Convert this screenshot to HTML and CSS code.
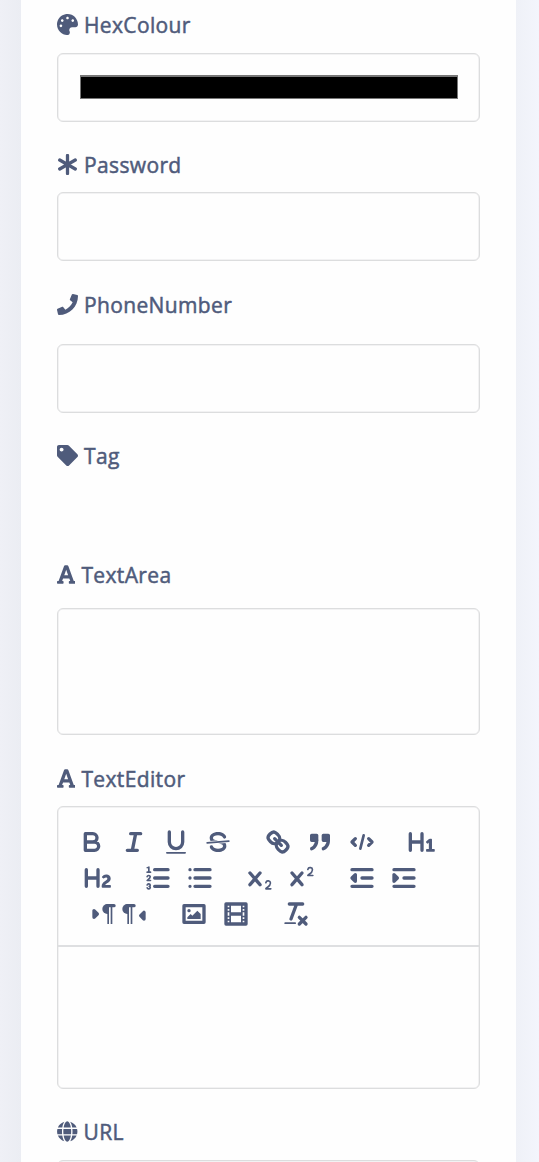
FILE: index.html
```html
<!DOCTYPE html>
<html lang="en">
<head>
<meta charset="utf-8">
<title>Form fields</title>
<link rel="stylesheet" href="styles.css">
</head>
<body>
<main class="card">
  <section class="field hex">
    <div class="label"><svg class="fa" viewBox="0 0 512 512"><path d="M204.3 5C104.9 24.4 24.8 104.3 5.2 203.4c-37 187 131.7 326.4 258.8 306.7 41.2-6.4 61.4-54.6 42.5-91.7-23.1-45.4 9.9-98.4 60.9-98.4h79.7c35.8 0 64.8-29.6 64.9-65.3C511.5 97.1 368.1-26.9 204.3 5zM96 320c-17.7 0-32-14.3-32-32s14.3-32 32-32 32 14.3 32 32-14.3 32-32 32zm32-128c-17.7 0-32-14.3-32-32s14.3-32 32-32 32 14.3 32 32-14.3 32-32 32zm128-64c-17.7 0-32-14.3-32-32s14.3-32 32-32 32 14.3 32 32-14.3 32-32 32zm128 64c-17.7 0-32-14.3-32-32s14.3-32 32-32 32 14.3 32 32-14.3 32-32 32z"/></svg><span>HexColour</span></div>
    <div class="input color"><div class="swatch"></div></div>
  </section>
  <section class="field password">
    <div class="label"><svg class="fa" viewBox="0 0 512 512"><path class="aster" d="M256 36V476M66 146L446 366M66 366L446 146"/></svg><span>Password</span></div>
    <div class="input"></div>
  </section>
  <section class="field phone">
    <div class="label"><svg class="fa" viewBox="0 0 512 512"><path d="M493.4 24.6l-104-24c-11.3-2.6-22.9 3.3-27.5 13.9l-48 112c-4.2 9.8-1.4 21.3 6.9 28l60.6 49.6c-36 76.7-98.9 140.5-177.2 177.2l-49.6-60.6c-6.8-8.3-18.2-11.1-28-6.9l-112 48C3.9 366.5-2 378.1.6 389.4l24 104C27.1 504.2 36.7 512 48 512c256.1 0 464-207.5 464-464 0-11.2-7.7-20.9-18.6-23.4z"/></svg><span>PhoneNumber</span></div>
    <div class="input"></div>
  </section>
  <section class="field tag">
    <div class="label"><svg class="fa" viewBox="0 0 512 512"><path d="M0 252.118V48C0 21.49 21.49 0 48 0h204.118a48 48 0 0 1 33.941 14.059l211.882 211.882c18.745 18.745 18.745 49.137 0 67.882L293.823 497.941c-18.745 18.745-49.137 18.745-67.882 0L14.059 286.059A48 48 0 0 1 0 252.118zM112 64c-26.51 0-48 21.49-48 48s21.49 48 48 48 48-21.49 48-48-21.49-48-48-48z"/></svg><span>Tag</span></div>
  </section>
  <section class="field area">
    <div class="label"><svg class="fa narrow" viewBox="0 0 448 512"><path d="M432 416h-23.41L277.88 53.69A32 32 0 0 0 247.58 32h-47.16a32 32 0 0 0-30.3 21.69L39.41 416H16a16 16 0 0 0-16 16v32a16 16 0 0 0 16 16h128a16 16 0 0 0 16-16v-32a16 16 0 0 0-16-16h-19.58l23.3-64h152.56l23.3 64H304a16 16 0 0 0-16 16v32a16 16 0 0 0 16 16h128a16 16 0 0 0 16-16v-32a16 16 0 0 0-16-16zM176.85 272L224 142.51 271.15 272z"/></svg><span>TextArea</span></div>
    <div class="input"></div>
  </section>
  <section class="field">
    <div class="label"><svg class="fa narrow" viewBox="0 0 448 512"><path d="M432 416h-23.41L277.88 53.69A32 32 0 0 0 247.58 32h-47.16a32 32 0 0 0-30.3 21.69L39.41 416H16a16 16 0 0 0-16 16v32a16 16 0 0 0 16 16h128a16 16 0 0 0 16-16v-32a16 16 0 0 0-16-16h-19.58l23.3-64h152.56l23.3 64H304a16 16 0 0 0-16 16v32a16 16 0 0 0 16 16h128a16 16 0 0 0 16-16v-32a16 16 0 0 0-16-16zM176.85 272L224 142.51 271.15 272z"/></svg><span>TextEditor</span></div>
    <div class="editor">
      <div class="toolbar">
        <div class="row">
          <div class="group">
            <svg class="ql" viewBox="0 0 18 18"><path class="s" d="M5,4H9.5A2.5,2.5,0,0,1,12,6.5v0A2.5,2.5,0,0,1,9.5,9H5V4ZM5,9h5.5A2.5,2.5,0,0,1,13,11.5v0A2.5,2.5,0,0,1,10.5,14H5V9Z"/></svg>
            <svg class="ql" viewBox="0 0 18 18"><path class="s" d="M7,4H13M5,14H11M8,14L10,4"/></svg>
            <svg class="ql" viewBox="0 0 18 18"><path class="s" d="M5,3V9a4.012,4.012,0,0,0,4,4H9a4.012,4.012,0,0,0,4-4V3"/><rect height="1" rx=".5" width="12" x="3" y="15"/></svg>
            <svg class="ql" viewBox="0 0 18 18"><path class="s thin" d="M15.5,8.5L2.5,9.5"/><path d="M9.007,8C6.542,7.791,6,7.519,6,6.5,6,5.792,7.283,5,9,5c1.571,0,2.765.679,2.969,1.309a1,1,0,0,0,1.9-.617C13.356,4.106,11.354,3,9,3,6.2,3,4,4.538,4,6.5a3.2,3.2,0,0,0,.5,1.843Z"/><path d="M8.984,10C11.457,10.208,12,10.479,12,11.5c0,0.708-1.283,1.5-3,1.5-1.571,0-2.765-.679-2.969-1.309a1,1,0,1,0-1.9.617C4.644,13.894,6.646,15,9,15c2.8,0,5-1.538,5-3.5a3.2,3.2,0,0,0-.5-1.843Z"/></svg>
          </div>
          <div class="group">
            <svg class="ql" viewBox="0 0 18 18"><path class="s" d="M7,7L11,11M8.9,4.577a3.476,3.476,0,0,1,.36,4.679A3.476,3.476,0,0,1,4.577,8.9C3.185,7.5,2.035,6.4,4.217,4.217S7.5,3.185,8.9,4.577ZM13.423,9.1a3.476,3.476,0,0,0-4.679-.36,3.476,3.476,0,0,0,.36,4.679c1.392,1.392,2.5,2.542,4.679.36S14.815,10.5,13.423,9.1Z"/></svg>
            <svg class="ql" viewBox="0 0 18 18"><rect class="s f block" height="3" width="3" x="4" y="5"/><rect class="s f block" height="3" width="3" x="11" y="5"/><path class="s f quote" d="M7,8c0,4.031-3,5-3,5M14,8c0,4.031-3,5-3,5"/></svg>
            <svg class="ql" viewBox="0 0 18 18"><path class="s" d="M5,7L3,9L5,11M13,7L15,9L13,11"/><path class="s slash" d="M10,5L8,13"/></svg>
          </div>
          <div class="group">
            <svg class="ql" viewBox="0 0 18 18"><path d="M10,4V14a1,1,0,0,1-2,0V10H3v4a1,1,0,0,1-2,0V4A1,1,0,0,1,3,4V8H8V4a1,1,0,0,1,2,0Zm6.06787,9.209H14.98975V7.59863a.54085.54085,0,0,0-.605-.60547h-.62744a1.01119,1.01119,0,0,0-.748.29688L11.645,8.56641a.5435.5435,0,0,0-.022.8584l.28613.30762a.53861.53861,0,0,0,.84717.0332l.09912-.08789a1.2137,1.2137,0,0,0,.2417-.35254h.02246s-.01123.30859-.01123.60547V13.209H12.041a.54085.54085,0,0,0-.605.60547v.43945a.54085.54085,0,0,0,.605.60547h4.02686a.54085.54085,0,0,0,.605-.60547v-.43945A.54085.54085,0,0,0,16.06787,13.209Z"/></svg>
          </div>
        </div>
        <div class="row second">
          <div class="group">
            <svg class="ql" viewBox="0 0 18 18"><path d="M16.73975,13.81445v.43945a.54085.54085,0,0,1-.605.60547H11.855a.58392.58392,0,0,1-.64893-.60547V14.0127c0-2.90527,3.39941-3.42187,3.39941-4.55469a.77675.77675,0,0,0-.84717-.78125,1.17684,1.17684,0,0,0-.83594.38477c-.2749.26367-.561.374-.85791.13184l-.4292-.34082c-.30811-.24219-.38525-.51758-.1543-.81445a2.97155,2.97155,0,0,1,2.45361-1.17676,2.45393,2.45393,0,0,1,2.68408,2.40918c0,2.45312-3.1792,2.92676-3.27832,3.93848h2.79443A.54085.54085,0,0,1,16.73975,13.81445ZM9,3A.99974.99974,0,0,0,8,4V8H3V4A1,1,0,0,0,1,4V14a1,1,0,0,0,2,0V10H8v4a1,1,0,0,0,2,0V4A.99974.99974,0,0,0,9,3Z"/></svg>
          </div>
          <div class="group">
            <svg class="ql" viewBox="0 0 18 18"><path class="s" d="M7,4H15M7,9H15M7,14H15"/><path class="s thin" d="M2.5,5.5H4.5M4.5,10.5h-2c0-.234,1.85-1.076,1.85-2.234A0.959,0.959,0,0,0,2.5,8.156M2.5,14.846a0.959,0.959,0,0,0,1.85-.109A0.7,0.7,0,0,0,3.75,14a0.688,0.688,0,0,0,.6-0.736,0.959,0.959,0,0,0-1.85-.109"/><path d="M3.5,6A0.5,0.5,0,0,1,3,5.5V3.085l-0.276.138A0.5,0.5,0,0,1,2.053,3c-0.124-.247-0.023-0.324.224-0.447l1-.5A0.5,0.5,0,0,1,4,2.5v3A0.5,0.5,0,0,1,3.5,6Z"/></svg>
            <svg class="ql" viewBox="0 0 18 18"><path class="s" d="M6,4H15M6,9H15M6,14H15M3,4H3M3,9H3M3,14H3"/></svg>
          </div>
          <div class="group">
            <svg class="ql" viewBox="0 0 18 18"><path d="M15.5,15H13.861a3.858,3.858,0,0,0,1.914-2.975,1.8,1.8,0,0,0-1.6-1.751A1.921,1.921,0,0,0,12.021,11.7a0.50013,0.50013,0,1,0,.957.291h0a0.914,0.914,0,0,1,1.053-.725,0.81,0.81,0,0,1,.744.762c0,1.076-1.16971,1.86982-1.93971,2.43082A1.45639,1.45639,0,0,0,12,15.5a0.5,0.5,0,0,0,.5.5h3A0.5,0.5,0,0,0,15.5,15Z"/><path d="M9.65,5.241a1,1,0,0,0-1.409.108L6,7.964,3.759,5.349A1,1,0,0,0,2.192,6.59178Q2.21541,6.6213,2.241,6.649L4.684,9.5,2.241,12.35A1,1,0,0,0,3.71,13.70722q.02557-.02768.049-.05722L6,11.036,8.241,13.65a1,1,0,1,0,1.567-1.24277Q9.78459,12.3777,9.759,12.35L7.316,9.5,9.759,6.651A1,1,0,0,0,9.65,5.241Z"/></svg>
            <svg class="ql" viewBox="0 0 18 18"><path d="M15.5,7H13.861a4.015,4.015,0,0,0,1.914-2.975,1.8,1.8,0,0,0-1.6-1.751A1.922,1.922,0,0,0,12.021,3.7a0.5,0.5,0,1,0,.957.291,0.917,0.917,0,0,1,1.053-.725,0.81,0.81,0,0,1,.744.762c0,1.077-1.164,1.925-1.934,2.486A1.423,1.423,0,0,0,12,7.5a0.5,0.5,0,0,0,.5.5h3A0.5,0.5,0,0,0,15.5,7Z"/><path d="M9.65,5.241a1,1,0,0,0-1.409.108L6,7.964,3.759,5.349A1,1,0,0,0,2.192,6.59178Q2.21541,6.6213,2.241,6.649L4.684,9.5,2.241,12.35A1,1,0,0,0,3.71,13.70722q.02557-.02768.049-.05722L6,11.036,8.241,13.65a1,1,0,1,0,1.567-1.24277Q9.78459,12.3777,9.759,12.35L7.316,9.5,9.759,6.651A1,1,0,0,0,9.65,5.241Z"/></svg>
          </div>
          <div class="group">
            <svg class="ql" viewBox="0 0 18 18"><path class="s" d="M3,14H15M3,4H15M9,9H15"/><path class="s f arrow" d="M5,7V11L3,9Z"/></svg>
            <svg class="ql" viewBox="0 0 18 18"><path class="s" d="M3,14H15M3,4H15M9,9H15"/><path class="s f arrow" d="M3,7V11L5,9Z"/></svg>
          </div>
        </div>
        <div class="row third">
          <div class="group">
            <svg class="ql ltr" viewBox="0 0 18 18"><path class="s f arrow" d="M3,11L5,9L3,7Z"/><path class="s" d="M15,4H11"/><path d="M11,3a3,3,0,0,0,0,6h1V3H11Z"/><rect height="11" width="1" x="11" y="4"/><rect height="11" width="1" x="13" y="4"/></svg>
            <svg class="ql" viewBox="0 0 18 18"><path class="s f arrow" d="M15,12L13,10L15,8Z"/><path class="s" d="M9,4H5"/><path d="M5,3A3,3,0,0,0,5,9H6V3H5Z"/><rect height="11" width="1" x="5" y="4"/><rect height="11" width="1" x="7" y="4"/></svg>
          </div>
          <div class="group">
            <svg class="ql" viewBox="0 0 18 18"><rect class="s" height="10" width="12" x="3" y="4"/><circle cx="6" cy="7" r="1"/><path d="M5,12V11L7,9L8,10L11,7L13,9V12Z"/></svg>
            <svg class="ql" viewBox="0 0 18 18"><rect class="s" height="12" width="12" x="3" y="3"/><path d="M5,3h1V15H5ZM12,3h1V15H12ZM5,8h8v2H5ZM3,5h3v1H3ZM3,7h3v1H3ZM3,10h3v1H3ZM3,12h3v1H3ZM12,5h3v1H12ZM12,7h3v1H12ZM12,10h3v1H12ZM12,12h3v1H12Z"/></svg>
          </div>
          <div class="group">
            <svg class="ql" viewBox="0 0 18 18"><path class="s" d="M5,3H13M6,12L9.35,3M11,11L15,15M15,11L11,15"/><rect height="1" rx=".5" width="7" x="2" y="14"/></svg>
          </div>
        </div>
      </div>
    </div>
  </section>
  <section class="field url">
    <div class="label"><svg class="fa globe" viewBox="0 0 496 512"><path d="M336.5 160C322 70.7 287.8 8 248 8s-74 62.7-88.5 152h177zM152 256c0 22.2 1.2 43.5 3.3 64h185.3c2.1-20.5 3.3-41.8 3.3-64s-1.2-43.5-3.3-64H155.3c-2.1 20.5-3.3 41.8-3.3 64zm324.7-96c-28.6-67.9-86.5-120.4-158-141.6 24.4 33.8 41.2 84.7 50 141.6h108zM177.2 18.4C105.8 39.6 47.8 92.1 19.3 160h108c8.7-56.9 25.5-107.8 49.9-141.6zM487.4 192H372.7c2.1 21 3.3 42.5 3.3 64s-1.2 43-3.3 64h114.6c5.5-20.5 8.6-41.8 8.6-64s-3.1-43.5-8.5-64zM120 256c0-21.5 1.2-43 3.3-64H8.6C3.2 212.5 0 233.8 0 256s3.2 43.5 8.6 64h114.6c-2-21-3.2-42.5-3.2-64zm39.5 96c14.5 89.3 48.7 152 88.5 152s74-62.7 88.5-152h-177zm159.3 141.6c71.4-21.2 129.4-73.7 158-141.6h-108c-8.8 56.9-25.6 107.8-50 141.6zM19.3 352c28.6 67.9 86.5 120.4 158 141.6-24.4-33.8-41.2-84.7-50-141.6h-108z"/></svg><span>URL</span></div>
    <div class="input"></div>
  </section>
</main>
</body>
</html>
```
FILE: styles.css
```css
* { box-sizing: border-box; }
html { height: 1162px; overflow: hidden; }
body {
  margin: 0;
  height: 1162px;
  overflow: hidden;
  background: linear-gradient(90deg, #eff0f6 0, #ebedf3 21px, #eff1f7 516px, #f3f5fc 539px);
  color: #4f5b7b;
  font: 400 21px/30px "Open Sans", "Noto Sans", sans-serif;
}
.card {
  width: 495px;
  height: 1162px;
  margin-left: 21px;
  padding: 9px 36px 0;
  background: #fefefe;
  overflow: hidden;
}
.field { display: flex; flex-direction: column; gap: 13px; margin-bottom: 27px; }
.field.hex { gap: 14px; }
.field.password { margin-bottom: 28px; }
.field.phone { gap: 25px; }
.field.tag { margin-bottom: 89px; }
.field.area { gap: 19px; margin-bottom: 28px; }
.label { display: flex; align-items: center; gap: 6px; height: 30px; }
.label span { padding-top: 1px; letter-spacing: .36px; -webkit-text-stroke: .5px #4f5b7b; }
.fa { width: 21px; height: 21px; fill: #4f5b7b; flex: none; }
.fa.narrow { width: 18.4px; }
.fa.globe { width: 20.5px; }
.aster { fill: none; stroke: #4f5b7b; stroke-width: 80; stroke-linecap: round; }
.input, .editor {
  border: 1px solid #dcddde;
  border-radius: 6px;
  box-shadow: inset 0 0 0 .5px #e6e6e8;
  background: #fefefe;
}
.input { height: 69px; flex: none; }
.color { padding: 21px 21px 22px 22px; }
.swatch { height: 24px; background: #000; border: 1px solid #777; border-top-width: 2px; }
.field.area .input { height: 127px; }
.field.url { gap: 14px; }
.editor { height: 283px; }
.toolbar { height: 140px; padding: 17px 0 0 12.5px; border-bottom: 2px solid #dedfe1; }
.row { display: flex; gap: 18px; height: 36px; }
.row.second { padding-left: 6px; }
.row.third { padding-left: 12px; }
.group { display: flex; }
.ql { width: 42px; height: 36px; padding: 3px 6px; fill: #4f5b7b; flex: none; }
.ql.ltr { margin-right: -12px; }
.s { fill: none; stroke: #4f5b7b; stroke-width: 2; stroke-linecap: round; stroke-linejoin: round; }
.s.f { fill: #4f5b7b; stroke-width: 1; }
.s.f.arrow { stroke-width: 2; }
.s.f.block { stroke-width: 2; }
.s.f.quote { fill: none; stroke-width: 2; }
.s.thin { stroke-width: 1; }
.s.slash { stroke-width: 1.6; }
```
